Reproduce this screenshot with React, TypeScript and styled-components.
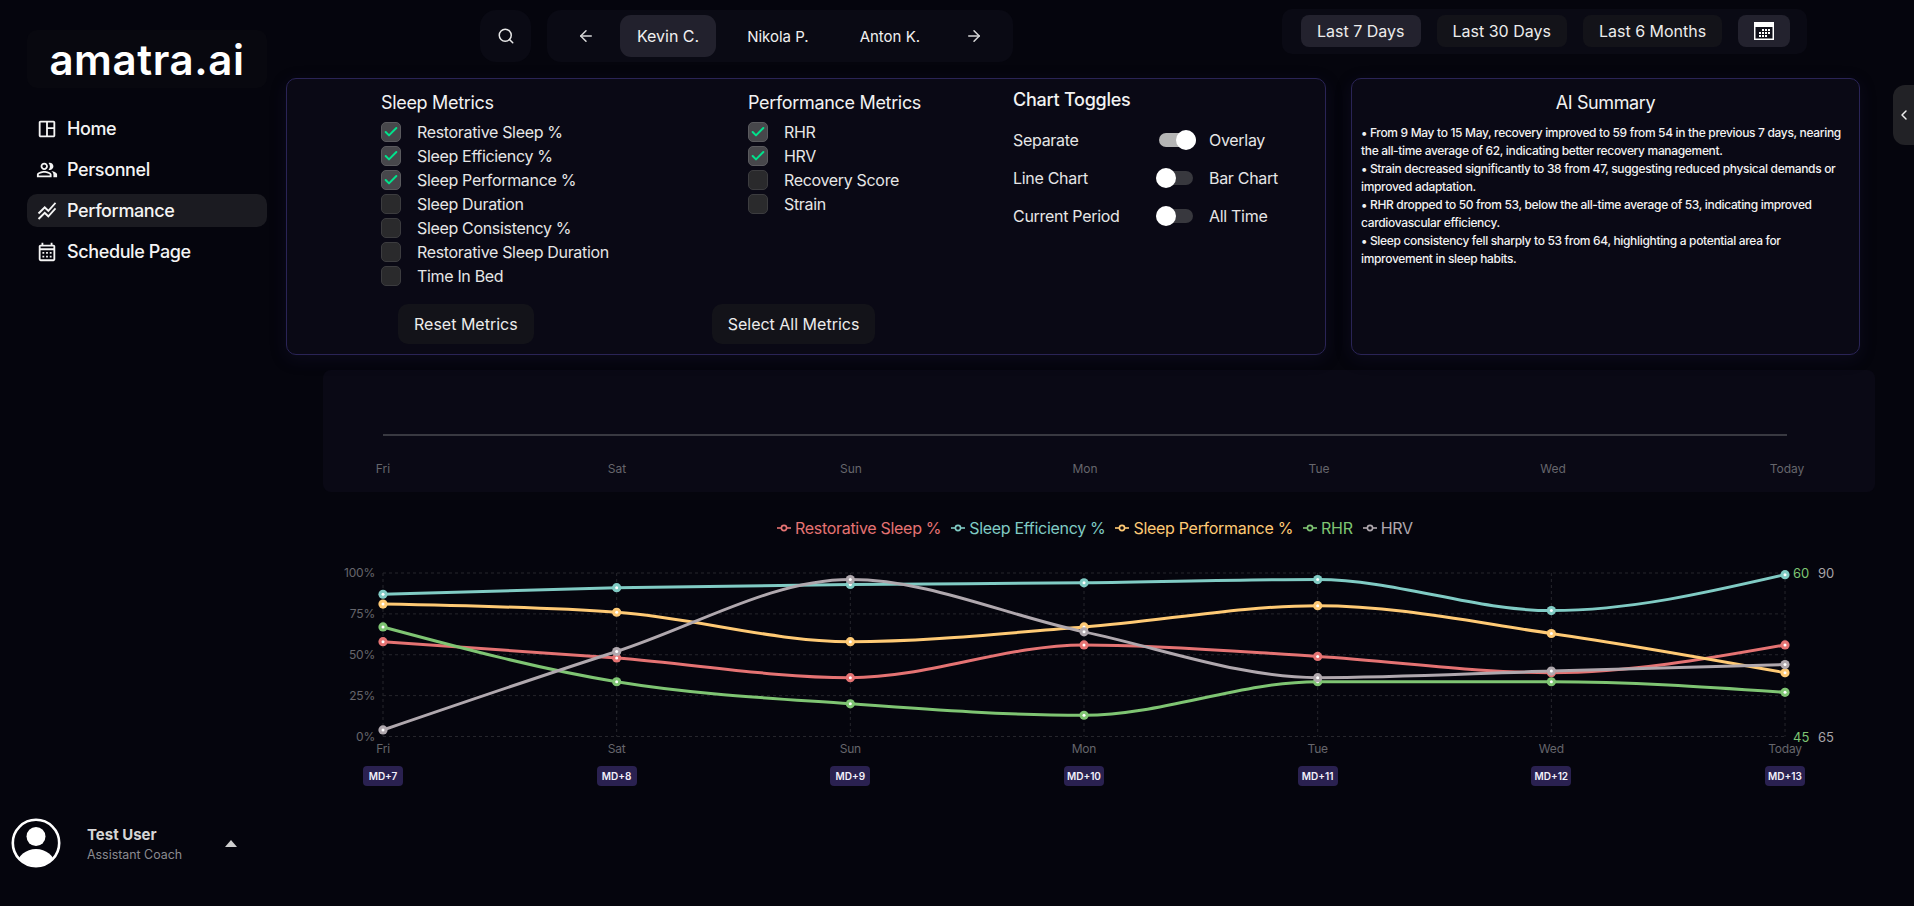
import React from 'react'
import styled, { createGlobalStyle } from 'styled-components'
import { ArrowLeft, ArrowRight, Check, ChevronLeft, Search } from 'lucide-react'
import {
    MdOutlineCalendarMonth,
    MdOutlinePeopleAlt,
    MdOutlineSpaceDashboard,
    MdStackedLineChart,
} from 'react-icons/md'

const FONT = `Inter, "Liberation Sans", sans-serif`

const DAYS = ['Fri', 'Sat', 'Sun', 'Mon', 'Tue', 'Wed', 'Today']
const DAY_TAGS = ['MD+7', 'MD+8', 'MD+9', 'MD+10', 'MD+11', 'MD+12', 'MD+13']

const SERIES = [
    { name: 'Restorative Sleep %', color: '#e57373', values: [58, 48, 36, 56, 49, 39, 56] },
    { name: 'Sleep Efficiency %', color: '#80cbc4', values: [87, 91, 93, 94, 96, 77, 99] },
    { name: 'Sleep Performance %', color: '#ffca75', values: [81, 76, 58, 67, 80, 63, 39] },
    { name: 'RHR', color: '#7fc573', values: [67, 33.5, 20, 13, 33.5, 33.5, 27] },
    { name: 'HRV', color: '#b0a8ae', values: [4, 52, 96, 64, 36, 40, 44] },
]

const SLEEP_METRICS = [
    { label: 'Restorative Sleep %', on: true },
    { label: 'Sleep Efficiency %', on: true },
    { label: 'Sleep Performance %', on: true },
    { label: 'Sleep Duration', on: false },
    { label: 'Sleep Consistency %', on: false },
    { label: 'Restorative Sleep Duration', on: false },
    { label: 'Time In Bed', on: false },
]

const PERFORMANCE_METRICS = [
    { label: 'RHR', on: true },
    { label: 'HRV', on: true },
    { label: 'Recovery Score', on: false },
    { label: 'Strain', on: false },
]

const TOGGLES = [
    { left: 'Separate', right: 'Overlay', on: true },
    { left: 'Line Chart', right: 'Bar Chart', on: false },
    { left: 'Current Period', right: 'All Time', on: false },
]

const SUMMARY = [
    '• From 9 May to 15 May, recovery improved to 59 from 54 in the previous 7 days, nearing the all-time average of 62, indicating better recovery management.',
    '• Strain decreased significantly to 38 from 47, suggesting reduced physical demands or improved adaptation.',
    '• RHR dropped to 50 from 53, below the all-time average of 53, indicating improved cardiovascular efficiency.',
    '• Sleep consistency fell sharply to 53 from 64, highlighting a potential area for improvement in sleep habits.',
]

// chart geometry, svg starts at page x 286
const PLOT_LEFT = 97
const PLOT_STEP = 233.67
const PLOT_TOP = 12
const PLOT_HEIGHT = 163.5

const xAt = (i: number) => PLOT_LEFT + i * PLOT_STEP
const yAt = (pct: number) => PLOT_TOP + PLOT_HEIGHT * (1 - pct / 100)

// same curve as recharts "monotone"
const monotonePath = (values: number[]) => {
    const pts = values.map((v, i) => [xAt(i), yAt(v)])
    const n = pts.length
    const slopes: number[] = []
    for (let i = 0; i < n - 1; i++) {
        slopes.push((pts[i + 1][1] - pts[i][1]) / (pts[i + 1][0] - pts[i][0]))
    }
    const tangents: number[] = new Array(n).fill(0)
    for (let i = 1; i < n - 1; i++) {
        const a = slopes[i - 1]
        const b = slopes[i]
        if (a * b > 0) {
            const s = (a + b) / 2
            tangents[i] = (Math.sign(a) || 1) * Math.min(Math.abs(a), Math.abs(b), 0.5 * Math.abs(s)) * 2
        }
    }
    tangents[0] = (3 * slopes[0] - tangents[1]) / 2
    tangents[n - 1] = (3 * slopes[n - 2] - tangents[n - 2]) / 2
    let d = `M${pts[0][0]},${pts[0][1]}`
    for (let i = 0; i < n - 1; i++) {
        const dx = (pts[i + 1][0] - pts[i][0]) / 3
        d += `C${pts[i][0] + dx},${pts[i][1] + dx * tangents[i]} ${pts[i + 1][0] - dx},${pts[i + 1][1] - dx * tangents[i + 1]} ${pts[i + 1][0]},${pts[i + 1][1]}`
    }
    return d
}

const OverlayChart = () => (
    <ChartSvg width={1600} height={205} viewBox="0 0 1600 205">
        {[0, 25, 50, 75, 100].map((pct) => (
            <g key={pct}>
                <line x1={PLOT_LEFT} x2={xAt(6)} y1={yAt(pct)} y2={yAt(pct)} stroke="#26262c" strokeDasharray="3 3" />
                <AxisText x={PLOT_LEFT - 8} y={yAt(pct) + 4} textAnchor="end">{pct}%</AxisText>
            </g>
        ))}
        {DAYS.map((day, i) => (
            <g key={day}>
                <line x1={xAt(i)} x2={xAt(i)} y1={PLOT_TOP} y2={PLOT_TOP + PLOT_HEIGHT} stroke="#26262c" strokeDasharray="3 3" />
                <AxisText x={xAt(i)} y={PLOT_TOP + PLOT_HEIGHT + 16} textAnchor="middle">{day}</AxisText>
            </g>
        ))}
        {SERIES.map((s) => (
            <path key={s.name} d={monotonePath(s.values)} fill="none" stroke={s.color} strokeWidth={3} />
        ))}
        {SERIES.map((s) =>
            s.values.map((v, i) => (
                <g key={s.name + i}>
                    <circle cx={xAt(i)} cy={yAt(v)} r={4.6} fill={s.color} />
                    <circle cx={xAt(i)} cy={yAt(v)} r={1.5} fill="#fff" />
                </g>
            ))
        )}
        <SideText x={1507} y={PLOT_TOP + 5} fill="#7fc573">60</SideText>
        <SideText x={1507} y={PLOT_TOP + PLOT_HEIGHT + 5} fill="#7fc573">45</SideText>
        <SideText x={1532} y={PLOT_TOP + 5} fill="#a8a4a8">90</SideText>
        <SideText x={1532} y={PLOT_TOP + PLOT_HEIGHT + 5} fill="#a8a4a8">65</SideText>
    </ChartSvg>
)

const MetricList = ({ title, items }: { title: string; items: { label: string; on: boolean }[] }) => (
    <div>
        <MetricTitle>{title}</MetricTitle>
        {items.map((item) => (
            <MetricRow key={item.label}>
                <CheckBox $on={item.on}>
                    {item.on && <Check size={16} color="#00e38c" strokeWidth={3} />}
                </CheckBox>
                {item.label}
            </MetricRow>
        ))}
    </div>
)

const UserAvatar = () => (
    <svg width="50" height="50" viewBox="0 0 50 50">
        <defs>
            <clipPath id="avatar-clip">
                <circle cx="25" cy="25" r="22.5" />
            </clipPath>
        </defs>
        <circle cx="25" cy="25" r="23.2" fill="none" stroke="#fff" strokeWidth="2.6" />
        <circle cx="25" cy="18.5" r="9.5" fill="#fff" />
        <ellipse cx="25" cy="46" rx="18.5" ry="15" fill="#fff" clipPath="url(#avatar-clip)" />
    </svg>
)

const CalendarGlyph = () => (
    <svg width="20" height="18" viewBox="0 0 20 18">
        <rect x="0.75" y="0.75" width="18.5" height="16.5" fill="#10101a" stroke="#fff" strokeWidth="1.5" />
        <rect x="1" y="1" width="18" height="4" fill="#fff" />
        {[[8, 7], [11, 7], [14, 7], [5, 10], [8, 10], [11, 10], [14, 10], [5, 13], [8, 13], [11, 13]].map(([x, y]) => (
            <rect key={`${x}-${y}`} x={x} y={y} width="2" height="2" fill="#fff" />
        ))}
    </svg>
)

export default function App() {
    return (
        <Page>
            <GlobalStyle />
            <Sidebar>
                <div>
                    <LogoBox>amatra.ai</LogoBox>
                    <Nav>
                        <NavItem><MdOutlineSpaceDashboard size={22} />Home</NavItem>
                        <NavItem><MdOutlinePeopleAlt size={22} />Personnel</NavItem>
                        <NavItem $active><MdStackedLineChart size={22} />Performance</NavItem>
                        <NavItem><MdOutlineCalendarMonth size={22} />Schedule Page</NavItem>
                    </Nav>
                </div>
                <UserRow>
                    <UserAvatar />
                    <UserText>
                        <UserName>Test User</UserName>
                        <UserRole>Assistant Coach</UserRole>
                    </UserText>
                    <Caret />
                </UserRow>
            </Sidebar>

            <Main>
                <TopBar>
                    <SearchButton><Search size={18} strokeWidth={2} /></SearchButton>
                    <PlayerBar>
                        <ArrowLeft size={18} color="#d8d8d8" />
                        <PlayerNames>
                            <PlayerPill $active>Kevin C.</PlayerPill>
                            <PlayerPill>Nikola P.</PlayerPill>
                            <PlayerPill>Anton K.</PlayerPill>
                        </PlayerNames>
                        <ArrowRight size={18} color="#d8d8d8" />
                    </PlayerBar>
                    <RangeBar>
                        <RangeButton $active>Last 7 Days</RangeButton>
                        <RangeButton>Last 30 Days</RangeButton>
                        <RangeButton>Last 6 Months</RangeButton>
                        <CalendarButton><CalendarGlyph /></CalendarButton>
                    </RangeBar>
                </TopBar>

                <PanelRow>
                    <MetricsPanel>
                        <MetricColumns>
                            <MetricList title="Sleep Metrics" items={SLEEP_METRICS} />
                            <MetricList title="Performance Metrics" items={PERFORMANCE_METRICS} />
                            <div>
                                <ToggleTitle>Chart Toggles</ToggleTitle>
                                {TOGGLES.map((t) => (
                                    <ToggleRow key={t.left}>
                                        <span>{t.left}</span>
                                        <Switch $on={t.on} />
                                        <span>{t.right}</span>
                                    </ToggleRow>
                                ))}
                            </div>
                        </MetricColumns>
                        <PanelActions>
                            <ActionButton>Reset Metrics</ActionButton>
                            <ActionButton>Select All Metrics</ActionButton>
                        </PanelActions>
                    </MetricsPanel>
                    <SummaryPanel>
                        <SummaryTitle>AI Summary</SummaryTitle>
                        {SUMMARY.map((line) => (
                            <SummaryLine key={line}>{line}</SummaryLine>
                        ))}
                    </SummaryPanel>
                </PanelRow>

                <EmptyChart>
                    <BaseLine />
                    <EmptyLabels>
                        {DAYS.map((day) => <EmptyLabel key={day}>{day}</EmptyLabel>)}
                    </EmptyLabels>
                </EmptyChart>

                <Legend>
                    {SERIES.map((s) => (
                        <LegendItem key={s.name} $color={s.color}>
                            <svg width="14" height="10" viewBox="0 0 14 10">
                                <line x1="0" x2="14" y1="5" y2="5" stroke={s.color} strokeWidth="1.6" />
                                <circle cx="7" cy="5" r="2.6" fill="#05050d" stroke={s.color} strokeWidth="1.6" />
                            </svg>
                            {s.name}
                        </LegendItem>
                    ))}
                </Legend>

                <OverlayChart />

                <TagRow>
                    {DAY_TAGS.map((tag) => <DayTag key={tag}>{tag}</DayTag>)}
                </TagRow>
            </Main>

            <CollapseTab><ChevronLeft size={16} strokeWidth={2.2} /></CollapseTab>
        </Page>
    )
}

const GlobalStyle = createGlobalStyle`
    html, body {
        margin: 0;
        background: #05050d;
    }
    * {
        box-sizing: border-box;
    }
`

const Page = styled.div`
    display: flex;
    width: 1914px;
    height: 906px;
    overflow: hidden;
    position: relative;
    background: #05050d;
    color: #f2f2f2;
    font-family: ${FONT};
`

const Sidebar = styled.aside`
    width: 286px;
    flex-shrink: 0;
    display: flex;
    flex-direction: column;
    justify-content: space-between;
    padding: 30px 0 38px;
`

const LogoBox = styled.div`
    width: 240px;
    height: 58px;
    margin-left: 27px;
    display: flex;
    align-items: center;
    justify-content: center;
    background: #08080f;
    border-radius: 10px;
    font-size: 42px;
    font-weight: 600;
    letter-spacing: 0.6px;
    color: #fff;
`

const Nav = styled.nav`
    margin: 24px 0 0 27px;
    width: 240px;
    display: flex;
    flex-direction: column;
    gap: 8px;
`

const NavItem = styled.div<{ $active?: boolean }>`
    height: 33px;
    display: flex;
    align-items: center;
    gap: 9px;
    padding-left: 9px;
    border-radius: 10px;
    font-size: 18px;
    font-weight: 500;
    letter-spacing: -0.38px;
    color: #f4f4f4;
    background: ${(p) => (p.$active ? '#1b1b21' : 'transparent')};
`

const UserRow = styled.div`
    display: flex;
    align-items: center;
    padding-left: 11px;
`

const UserText = styled.div`
    margin: 3px 0 0 26px;
    width: 138px;
`

const UserName = styled.div`
    font-size: 15px;
    font-weight: 700;
    color: #d6d6d6;
    line-height: 20px;
`

const UserRole = styled.div`
    font-size: 12.4px;
    color: #8b8b90;
    line-height: 20px;
`

const Caret = styled.div`
    width: 0;
    height: 0;
    border-left: 6px solid transparent;
    border-right: 6px solid transparent;
    border-bottom: 7px solid #cfcfcf;
`

const Main = styled.main`
    flex: 1;
    min-width: 0;
`

const TopBar = styled.div`
    height: 78px;
    display: flex;
    align-items: flex-start;
    padding-top: 10px;
`

const SearchButton = styled.div`
    width: 51px;
    height: 52px;
    margin-left: 194px;
    display: flex;
    align-items: center;
    justify-content: center;
    border-radius: 16px;
    background: #0a0a14;
    color: #e8e8e8;
`

const PlayerBar = styled.div`
    width: 466px;
    height: 52px;
    margin-left: 16px;
    padding: 0 30px;
    display: flex;
    align-items: center;
    justify-content: space-between;
    border-radius: 14px;
    background: #0a0a14;
`

const PlayerNames = styled.div`
    display: flex;
    align-items: center;
    gap: 14px;
`

const PlayerPill = styled.div<{ $active?: boolean }>`
    height: 42px;
    padding: ${(p) => (p.$active ? '0 17px' : '0 20px 0 17px')};
    display: flex;
    align-items: center;
    border-radius: 11px;
    font-size: ${(p) => (p.$active ? '16px' : '15px')};
    color: #f0f0f0;
    background: ${(p) => (p.$active ? '#22212d' : 'transparent')};
`

const RangeBar = styled.div`
    width: 525px;
    height: 45px;
    margin: -1px 0 0 269px;
    padding: 6px 16px 0 19px;
    display: flex;
    align-items: flex-start;
    gap: 16px;
    border-radius: 10px;
    background: #0a0a14;
`

const RangeButton = styled.div<{ $active?: boolean }>`
    height: 32px;
    padding: 0 16px;
    display: flex;
    align-items: center;
    border-radius: 8px;
    font-size: 16px;
    color: #ececec;
    background: ${(p) => (p.$active ? '#23222e' : '#131319')};
`

const CalendarButton = styled.div`
    width: 52px;
    height: 32px;
    display: flex;
    align-items: center;
    justify-content: center;
    border-radius: 8px;
    background: #23222e;
`

const PanelRow = styled.div`
    display: flex;
    gap: 25px;
`

const Panel = styled.section`
    height: 277px;
    border: 1px solid #2a2456;
    border-radius: 10px;
    background: #0a0915;
    box-shadow: 0 4px 16px rgba(30, 26, 70, 0.28);
`

const MetricsPanel = styled(Panel)`
    width: 1040px;
    display: flex;
    flex-direction: column;
    justify-content: space-between;
    padding-bottom: 10px;
`

const MetricColumns = styled.div`
    display: grid;
    grid-template-columns: 367px 265px 1fr;
    padding: 13px 0 0 94px;
`

const MetricTitle = styled.div`
    font-size: 18px;
    letter-spacing: -0.32px;
    line-height: 22px;
    margin-bottom: 6px;
`

const MetricRow = styled.div`
    height: 24px;
    display: flex;
    align-items: center;
    gap: 16px;
    font-size: 16px;
    letter-spacing: -0.33px;
    color: #e6e6e6;
`

const CheckBox = styled.div<{ $on: boolean }>`
    width: 20px;
    height: 20px;
    display: flex;
    align-items: center;
    justify-content: center;
    border-radius: 5px;
    border: 1px solid ${(p) => (p.$on ? '#5a5a5e' : '#3c3c3f')};
    background: ${(p) => (p.$on ? '#47474b' : '#2a2a2c')};
`

const ToggleTitle = styled.div`
    margin-top: -3px;
    margin-bottom: 10px;
    font-size: 18px;
    font-weight: 500;
    letter-spacing: -0.25px;
    line-height: 22px;
`

const ToggleRow = styled.div`
    height: 38px;
    display: grid;
    grid-template-columns: 143px 53px 1fr;
    align-items: center;
    font-size: 16px;
    letter-spacing: -0.3px;
    color: #e6e6e6;
`

const Switch = styled.div<{ $on: boolean }>`
    width: 37px;
    height: 14px;
    margin-left: ${(p) => (p.$on ? '3px' : '0')};
    border-radius: 7px;
    position: relative;
    background: ${(p) => (p.$on ? '#b5b5b5' : '#38383e')};
    &::after {
        content: '';
        position: absolute;
        top: -3px;
        left: ${(p) => (p.$on ? '17px' : '0')};
        width: 20px;
        height: 20px;
        border-radius: 50%;
        background: #fff;
    }
`

const PanelActions = styled.div`
    display: flex;
    gap: 178px;
    padding-left: 111px;
`

const ActionButton = styled.div`
    height: 40px;
    padding: 0 16px;
    display: flex;
    align-items: center;
    border-radius: 10px;
    font-size: 16px;
    color: #ececec;
    background: #131319;
`

const SummaryPanel = styled(Panel)`
    width: 509px;
    padding: 13px 9px 0 9px;
`

const SummaryTitle = styled.div`
    text-align: center;
    font-size: 18px;
    letter-spacing: -0.4px;
    line-height: 22px;
    margin-bottom: 10px;
`

const SummaryLine = styled.div`
    font-size: 12px;
    letter-spacing: -0.33px;
    line-height: 18px;
    font-weight: 500;
    color: #f2f2f2;
`

const EmptyChart = styled.div`
    width: 1552px;
    height: 122px;
    margin: 15px 0 0 37px;
    padding: 64px 88px 0 60px;
    border-radius: 8px;
    background: #0a0915;
`

const BaseLine = styled.div`
    height: 2px;
    background: #393941;
`

const EmptyLabels = styled.div`
    display: flex;
    justify-content: space-between;
    margin: 25px -24px 0;
`

const EmptyLabel = styled.span`
    width: 48px;
    text-align: center;
    font-size: 12px;
    line-height: 16px;
    color: #66666c;
`

const Legend = styled.div`
    margin: 25px 0 0 491px;
    height: 22px;
    display: flex;
    align-items: center;
    gap: 10px;
`

const LegendItem = styled.div<{ $color: string }>`
    display: flex;
    align-items: center;
    gap: 4px;
    font-size: 16px;
    letter-spacing: -0.3px;
    color: ${(p) => p.$color};
`

const ChartSvg = styled.svg`
    display: block;
    margin-top: 22px;
`

const AxisText = styled.text`
    font-family: ${FONT};
    font-size: 12px;
    letter-spacing: -0.2px;
    fill: #66666c;
`

const SideText = styled.text`
    font-family: ${FONT};
    font-size: 13px;
`

const TagRow = styled.div`
    width: 1442px;
    margin: 0 0 0 77px;
    display: flex;
    justify-content: space-between;
`

const DayTag = styled.div`
    width: 40px;
    height: 20px;
    display: flex;
    align-items: center;
    justify-content: center;
    border-radius: 4px;
    font-size: 10px;
    font-weight: 600;
    color: #f2f0fa;
    background: #2a2150;
`

const CollapseTab = styled.div`
    position: absolute;
    right: 0;
    top: 85px;
    width: 21px;
    height: 60px;
    display: flex;
    align-items: center;
    justify-content: center;
    border-radius: 12px 0 0 12px;
    color: #eee;
    background: #222226;
`
